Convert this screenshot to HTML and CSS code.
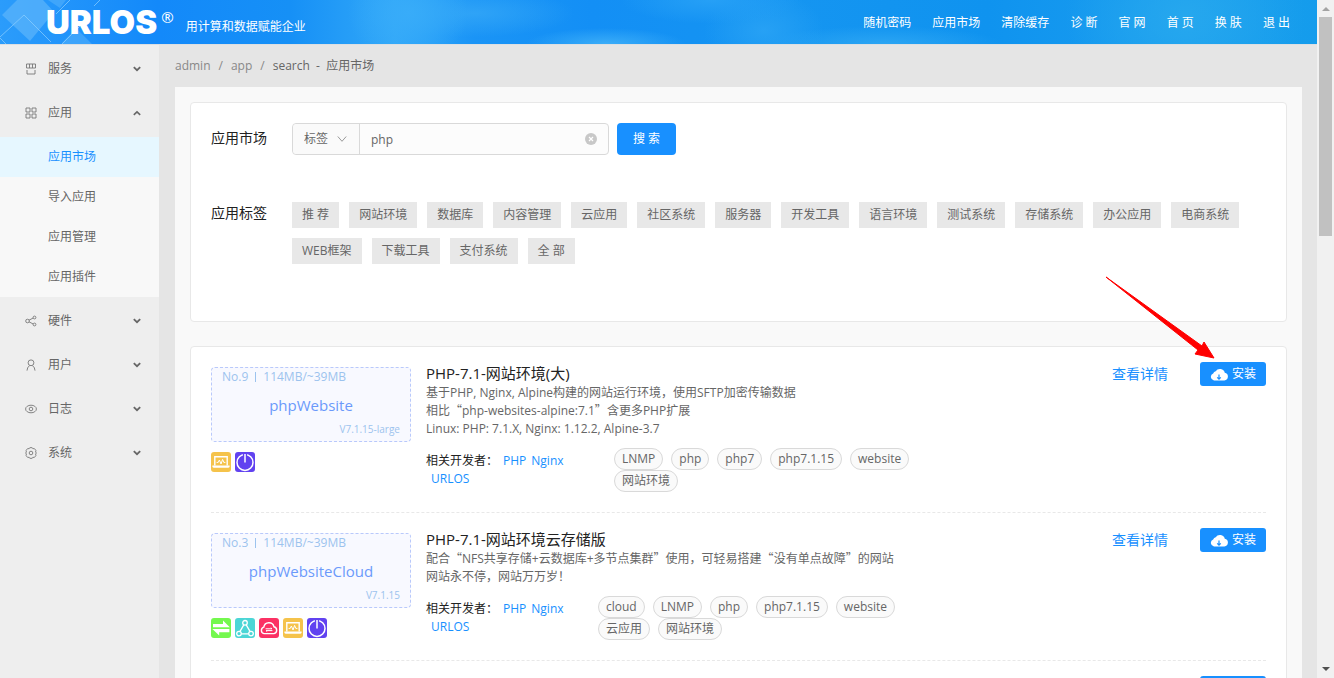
FILE: index.html
```html
<!DOCTYPE html>
<html lang="zh-CN">
<head>
    <meta charset="utf-8">
    <title>URLOS</title>
    <link rel="stylesheet" href="styles.css">
</head>
<body>
    <!-- shared icons -->
    <svg class="defs" width="0" height="0">
        <symbol id="i-down" viewBox="0 0 8 6"><path d="M0.8 1.2 L4 4.2 L7.2 1.2" fill="none" stroke="currentColor" stroke-width="1.8"/></symbol>
        <symbol id="i-up" viewBox="0 0 8 6"><path d="M0.8 4.8 L4 1.8 L7.2 4.8" fill="none" stroke="currentColor" stroke-width="1.6"/></symbol>
        <symbol id="i-cloud" viewBox="0 0 18 13">
            <path d="M4 12.5 A3.7 3.7 0 0 1 3.2 5.4 A3.4 3.4 0 0 1 5.7 3.3 A5 5 0 0 1 14.8 4.8 A3.9 3.9 0 0 1 14.4 12.5 Z" fill="#fff"/>
            <path d="M9 6.4 V11.2 M7.2 9.4 L9 11.2 L10.8 9.4" fill="none" stroke="#1890ff" stroke-width="1.2"/>
        </symbol>
        <symbol id="b-swap" viewBox="0 0 20 20">
            <rect width="20" height="20" rx="3" fill="#74f84e"/>
            <path d="M2 5.9 H12 V2.4 L18.8 9.2 H2 Z M18.4 11 H1.4 L8.2 17.6 V14.2 H18.4 Z" fill="#fff"/>
        </symbol>
        <symbol id="b-nodes" viewBox="0 0 20 20">
            <rect width="20" height="20" rx="3" fill="#4cd6d6"/>
            <g fill="none" stroke="#fff" stroke-width="1.3">
                <circle cx="10" cy="4.8" r="2.3"/><circle cx="4" cy="15.6" r="2.3"/><circle cx="16" cy="15.6" r="2.3"/>
                <path d="M8.8 6.9 L5 13.4 M11.2 6.9 L15 13.4 M6.4 15.8 H13.6"/>
            </g>
        </symbol>
        <symbol id="b-cloud" viewBox="0 0 20 20">
            <rect width="20" height="20" rx="3" fill="#fb3164"/>
            <path d="M5 15.6 A3.3 3.3 0 0 1 4.8 9.2 A5.2 5.2 0 0 1 15 8.8 A3.5 3.5 0 0 1 15 15.6 Z" fill="none" stroke="#fff" stroke-width="1.4"/>
            <path d="M6.6 10.8 H13 L11.8 9.8 M13.4 12.6 H7 L8.2 13.6" fill="none" stroke="#fff" stroke-width="1"/>
        </symbol>
        <symbol id="b-laptop" viewBox="0 0 20 20">
            <rect width="20" height="20" rx="3" fill="#f5c34b"/>
            <path d="M3.8 13.6 V4.8 H16.2 V13.6" fill="none" stroke="#fff" stroke-width="1.4"/>
            <path d="M1.4 13.6 H18.6 V14.6 Q18.4 15.8 17 15.8 H3 Q1.6 15.8 1.4 14.6 Z" fill="#fff"/>
            <path d="M5.6 10.4 H7.2 L8.4 8 L10 12 L11.6 7.4 L12.8 10.4 H14.4" fill="none" stroke="#fff" stroke-width="1"/>
        </symbol>
        <symbol id="b-power" viewBox="0 0 20 20">
            <rect width="20" height="20" rx="3" fill="#6142f0"/>
            <circle cx="10" cy="10.4" r="8" fill="none" stroke="#fff" stroke-width="1.5"/>
            <path d="M10 1 V10.4" stroke="#6142f0" stroke-width="4"/>
            <path d="M10 2 V10.4" stroke="#fff" stroke-width="1.5"/>
        </symbol>
    </svg>

    <div class="page">
        <header class="header">
            <svg class="header-pattern" viewBox="0 0 160 44" width="160" height="44">
                <path d="M2 15 L17 0 H43 L54 12 L30 41 Z" fill="#5cb5fb" opacity="0.7"/>
                <path d="M48 0 H66 L60 8 Z M62 43 L76 28 L92 44 H62 Z" fill="#5cb5fb" opacity="0.5"/>
                <path d="M0 37 L24 15 L51 42 M70 0 L56 14 M100 0 L94 6 M62 44 L80 26 M0 38 L6 44" fill="none" stroke="#8fd0ff" opacity="0.7"/>
            </svg>
            <h1 class="logo">URLOS<sup>®</sup></h1>
            <p class="slogan">用计算和数据赋能企业</p>
            <nav class="nav">
                <a href="#">随机密码</a>
                <a href="#">应用市场</a>
                <a href="#">清除缓存</a>
                <a href="#">诊 断</a>
                <a href="#">官 网</a>
                <a href="#">首 页</a>
                <a href="#">换 肤</a>
                <a href="#">退 出</a>
            </nav>
        </header>

        <div class="body">
            <aside class="sidebar">
                <ul class="menu">
                    <li><a class="menu-title" href="#">
                        <svg class="menu-icon" viewBox="0 0 12 12"><path d="M1.5 1 H10.5 V5 H1.5 Z M4.5 1 V5 M7.5 1 V5 M2 7 V11 H10 V7"/></svg>
                        服务<svg class="arrow"><use href="#i-down"/></svg></a></li>
                    <li><a class="menu-title" href="#">
                        <svg class="menu-icon" viewBox="0 0 12 12"><path d="M1 1 H5 V5 H1 Z M7 1 H11 V5 H7 Z M1 7 H5 V11 H1 Z M7 7 H11 V11 H7 Z"/></svg>
                        应用<svg class="arrow"><use href="#i-up"/></svg></a>
                        <ul class="submenu">
                            <li><a class="active" href="#">应用市场</a></li>
                            <li><a href="#">导入应用</a></li>
                            <li><a href="#">应用管理</a></li>
                            <li><a href="#">应用插件</a></li>
                        </ul>
                    </li>
                    <li><a class="menu-title" href="#">
                        <svg class="menu-icon" viewBox="0 0 12 12"><circle cx="2.5" cy="6" r="1.8"/><circle cx="9.5" cy="2.5" r="1.4"/><circle cx="9.5" cy="9.5" r="1.4"/><path d="M4 5.2 L8.2 3 M4 6.8 L8.2 9"/></svg>
                        硬件<svg class="arrow"><use href="#i-down"/></svg></a></li>
                    <li><a class="menu-title" href="#">
                        <svg class="menu-icon" viewBox="0 0 12 12"><circle cx="6" cy="3.8" r="2.9"/><path d="M2 11.6 Q2.2 7.6 4.6 6.8 M10 11.6 Q9.8 7.6 7.4 6.8"/></svg>
                        用户<svg class="arrow"><use href="#i-down"/></svg></a></li>
                    <li><a class="menu-title" href="#">
                        <svg class="menu-icon" viewBox="0 0 12 12"><ellipse cx="6" cy="6" rx="5.4" ry="3.8"/><circle cx="6" cy="6" r="1.8"/></svg>
                        日志<svg class="arrow"><use href="#i-down"/></svg></a></li>
                    <li><a class="menu-title" href="#">
                        <svg class="menu-icon" viewBox="0 0 12 12"><path d="M4.8 0.7 H7.2 L7.8 1.7 L9.4 1.6 L10.9 3.4 L10.6 5 L11.4 6 L10.6 7 L10.9 8.6 L9.4 10.4 L7.8 10.3 L7.2 11.3 H4.8 L4.2 10.3 L2.6 10.4 L1.1 8.6 L1.4 7 L0.6 6 L1.4 5 L1.1 3.4 L2.6 1.6 L4.2 1.7 Z"/><circle cx="6" cy="6" r="1.8"/></svg>
                        系统<svg class="arrow"><use href="#i-down"/></svg></a></li>
                </ul>
            </aside>

            <main class="content">
                <div class="breadcrumb"><a href="#">admin</a><i>/</i><a href="#">app</a><i>/</i><span>search &nbsp;- &nbsp;应用市场</span></div>

                <div class="panel">
                    <section class="card filter">
                        <form class="filter-row">
                            <label class="filter-label" for="keyword">应用市场</label>
                            <div class="search">
                                <div class="search-type">
                                    <select aria-label="标签"><option>标签</option></select>
                                    <svg viewBox="0 0 10 8"><path d="M0.8 1.5 L5 6.3 L9.2 1.5" fill="none" stroke="#999"/></svg>
                                </div>
                                <div class="search-text">
                                    <input id="keyword" type="text" value="php">
                                    <button class="clear" type="button"><svg viewBox="0 0 12 12"><circle cx="6" cy="6" r="6" fill="#c8c8c8"/><path d="M4 4 L8 8 M8 4 L4 8" stroke="#fff" stroke-width="1.2"/></svg></button>
                                </div>
                            </div>
                            <button class="btn btn-search" type="button">搜 索</button>
                        </form>
                        <div class="filter-row">
                            <span class="filter-label">应用标签</span>
                            <div class="labels">
                                <button>推 荐</button>
                                <button>网站环境</button>
                                <button>数据库</button>
                                <button>内容管理</button>
                                <button>云应用</button>
                                <button>社区系统</button>
                                <button>服务器</button>
                                <button>开发工具</button>
                                <button>语言环境</button>
                                <button>测试系统</button>
                                <button>存储系统</button>
                                <button>办公应用</button>
                                <button>电商系统</button>
                                <button>WEB框架</button>
                                <button>下载工具</button>
                                <button>支付系统</button>
                                <button>全 部</button>
                            </div>
                        </div>
                    </section>

                    <section class="card list">
                        <article class="app">
                            <div class="app-side">
                                <div class="thumb">
                                    <div class="thumb-top"><span>No.9</span><span>114MB/~39MB</span></div>
                                    <div class="thumb-name">phpWebsite</div>
                                    <div class="thumb-version">V7.1.15-large</div>
                                </div>
                                <div class="badges">
                                    <svg><use href="#b-laptop"/></svg>
                                    <svg><use href="#b-power"/></svg>
                                </div>
                            </div>
                            <div class="app-info">
                                <h2>PHP-7.1-网站环境(大)</h2>
                                <p>基于PHP, Nginx, Alpine构建的网站运行环境，使用SFTP加密传输数据<br>
                                相比<q>php-websites-alpine:7.1</q>含更多PHP扩展<br>
                                Linux: PHP: 7.1.X, Nginx: 1.12.2, Alpine-3.7</p>
                                <div class="meta">
                                    <div class="devs wide">相关开发者：<a href="#">PHP</a><a href="#">Nginx</a><br><a href="#">URLOS</a></div>
                                    <ul class="tags">
                                        <li>LNMP</li>
                                        <li>php</li>
                                        <li>php7</li>
                                        <li>php7.1.15</li>
                                        <li>website</li>
                                        <li>网站环境</li>
                                    </ul>
                                </div>
                            </div>
                            <div class="actions">
                                <a href="#">查看详情</a>
                                <button class="btn btn-install"><svg><use href="#i-cloud"/></svg>安装</button>
                            </div>
                        </article>

                        <article class="app">
                            <div class="app-side">
                                <div class="thumb">
                                    <div class="thumb-top"><span>No.3</span><span>114MB/~39MB</span></div>
                                    <div class="thumb-name">phpWebsiteCloud</div>
                                    <div class="thumb-version">V7.1.15</div>
                                </div>
                                <div class="badges">
                                    <svg><use href="#b-swap"/></svg>
                                    <svg><use href="#b-nodes"/></svg>
                                    <svg><use href="#b-cloud"/></svg>
                                    <svg><use href="#b-laptop"/></svg>
                                    <svg><use href="#b-power"/></svg>
                                </div>
                            </div>
                            <div class="app-info">
                                <h2>PHP-7.1-网站环境云存储版</h2>
                                <p>配合<q>NFS共享存储+云数据库+多节点集群</q>使用，可轻易搭建<q>没有单点故障</q>的网站<br>
                                网站永不停，网站万万岁！</p>
                                <div class="meta">
                                    <div class="devs">相关开发者：<a href="#">PHP</a><a href="#">Nginx</a><br><a href="#">URLOS</a></div>
                                    <ul class="tags">
                                        <li>cloud</li>
                                        <li>LNMP</li>
                                        <li>php</li>
                                        <li>php7.1.15</li>
                                        <li>website</li>
                                        <li>云应用</li>
                                        <li>网站环境</li>
                                    </ul>
                                </div>
                            </div>
                            <div class="actions">
                                <a href="#">查看详情</a>
                                <button class="btn btn-install"><svg><use href="#i-cloud"/></svg>安装</button>
                            </div>
                        </article>

                        <article class="app">
                            <div class="app-info"></div>
                            <div class="actions">
                                <button class="btn btn-install"><svg><use href="#i-cloud"/></svg></button>
                            </div>
                        </article>

                        <svg class="pointer" viewBox="0 0 112 86"><path d="M1 1 L93 74 L90 78 L109 82 L99 66 L97 70 Z" fill="#f00" stroke="#f00" stroke-width="1"/></svg>
                    </section>
                </div>
            </main>
        </div>
    </div>

    <div class="scrollbar">
        <svg viewBox="0 0 8 4"><path d="M0 4 L4 0 L8 4 Z" fill="#a3a3a3"/></svg>
        <div class="thumb-bar"></div>
        <svg viewBox="0 0 8 4"><path d="M0 0 L4 4 L8 0 Z" fill="#505050"/></svg>
    </div>
</body>
</html>
```
FILE: styles.css
```css
* {
    box-sizing: border-box;
}
body {
    margin: 0;
    display: flex;
    height: 100vh;
    overflow: hidden;
    font-family: "Open Sans", "Noto Sans CJK SC", sans-serif;
    font-size: 12px;
    line-height: 18px;
    color: #666;
    background: #e5e5e5;
}
h1, h2, p, ul {
    margin: 0;
    padding: 0;
    font-weight: normal;
}
ul {
    list-style: none;
}
a {
    color: inherit;
    text-decoration: none;
}
button, input, select {
    font: inherit;
    color: inherit;
    margin: 0;
    border: 0;
}
button {
    cursor: pointer;
    white-space: nowrap;
}
.defs {
    position: absolute;
}
.page {
    flex: 1;
    min-width: 0;
    display: flex;
    flex-direction: column;
}

/* header */
.header {
    position: relative;
    flex: none;
    height: 45px;
    display: flex;
    align-items: center;
    padding: 0 27px 0 46px;
    border-bottom: 1px solid #dcdfe2;
    color: #fff;
    background:
        radial-gradient(ellipse 60px 50px at 31% 30%, #38acf9, transparent),
        radial-gradient(ellipse 100px 24px at 36% 30%, #34a7f7cc, transparent),
        radial-gradient(ellipse 80px 16px at 46% 100%, #3badf8, transparent),
        radial-gradient(ellipse 90px 24px at 54% 0%, #26a0f6, transparent),
        radial-gradient(ellipse 60px 40px at 58% 70%, #2ba4f5cc, transparent),
        radial-gradient(ellipse 120px 18px at 67% 100%, #2ba5f3, transparent),
        radial-gradient(ellipse 120px 90px at 90% 40%, #2aabeebb, transparent),
        linear-gradient(90deg, #2b9cfb 0, #1389fa 12%, #1690f6 22%, #32a8f8 30%, #1a94f6 36%, #138ff5 45%, #1595f1 60%, #0f93ef 75%, #1b9eee 90%, #149cec 100%);
}
.header-pattern {
    position: absolute;
    left: 0;
    top: 0;
}
.logo {
    position: relative;
    display: flex;
    font-family: Inter, "Liberation Sans", sans-serif;
    font-size: 33px;
    font-weight: 900;
    line-height: 44px;
}
.logo sup {
    margin-left: 4px;
    font-family: "Open Sans", sans-serif;
    font-size: 15px;
    font-weight: normal;
    line-height: 34px;
}
.slogan {
    margin: 10px 0 0 12px;
}
.nav {
    margin-left: auto;
    padding-top: 2px;
    display: flex;
    gap: 21px;
}

/* sidebar */
.body {
    flex: 1;
    min-height: 0;
    display: flex;
}
.sidebar {
    flex: none;
    width: 159px;
    background: #eee;
}
.menu {
    padding-top: 1px;
}
.menu-title {
    display: flex;
    align-items: center;
    height: 44px;
    padding: 2px 18px 0 25px;
}
.menu-icon {
    width: 12px;
    height: 12px;
    margin-right: 11px;
    fill: none;
    stroke: #777;
    stroke-width: 0.9;
}
.arrow {
    width: 8px;
    height: 6px;
    margin-left: auto;
}
.submenu {
    margin: 3px 0 1px;
    background: #f8f8f8;
}
.submenu a {
    display: block;
    padding-left: 48px;
    line-height: 40px;
}
.submenu .active {
    color: #1890ff;
    background: #e6f7ff;
}

/* content */
.content {
    flex: 1;
    min-width: 0;
    padding: 0 15px 0 16px;
    overflow: hidden;
}
.breadcrumb {
    line-height: 42px;
    color: #888;
}
.breadcrumb i {
    margin: 0 8px;
    font-style: normal;
}
.breadcrumb span {
    color: #666;
}
.panel {
    padding: 15px;
    background: #f9f9f9;
}
.card {
    background: #fff;
    border: 1px solid #e8e8e8;
    border-radius: 4px;
}
.filter {
    padding: 20px 20px 57px;
    margin-bottom: 24px;
}
.filter-row {
    display: flex;
}
.filter-row + .filter-row {
    margin-top: 47px;
}
.filter-label {
    flex: none;
    width: 81px;
    font-size: 14px;
    line-height: 30px;
    color: #222;
}
.filter-row + .filter-row .filter-label {
    line-height: 22px;
}
.search {
    display: flex;
    width: 317px;
    height: 32px;
    margin-right: 8px;
    border: 1px solid #d9d9d9;
    border-radius: 4px;
    background: #fcfcfc;
}
.search-type {
    position: relative;
    width: 67px;
    border-right: 1px solid #d9d9d9;
    background: #fafafa;
    border-radius: 4px 0 0 4px;
}
.search-type select {
    width: 100%;
    height: 30px;
    padding: 0 11px;
    background: none;
    appearance: none;
}
.search-type svg {
    position: absolute;
    right: 12px;
    top: 11px;
    width: 10px;
    height: 8px;
    pointer-events: none;
}
.search-text {
    position: relative;
    flex: 1;
}
.search-text input {
    width: 100%;
    height: 30px;
    padding: 1px 30px 0 11px;
    background: none;
}
.clear {
    position: absolute;
    right: 11px;
    top: 9px;
    width: 12px;
    height: 12px;
    padding: 0;
    background: none;
}
.clear svg {
    display: block;
}
.btn {
    border-radius: 4px;
    color: #fff;
    background: #1890ff;
}
.btn-search {
    height: 32px;
    padding: 0 16px;
}
.labels {
    display: flex;
    flex-wrap: wrap;
    gap: 10px;
}
.labels button {
    height: 26px;
    padding: 0 10px;
    background: #e8e8e8;
}

/* app list */
.list {
    position: relative;
    padding: 0 20px;
}
.app {
    display: flex;
    padding: 15px 0 20px;
    border-bottom: 1px dashed #e8e8e8;
}
.app-side {
    flex: none;
    width: 200px;
    margin-right: 15px;
    padding-top: 5px;
}
.thumb {
    height: 75px;
    padding: 0 10px;
    border: 1px dashed #b9c9fb;
    border-radius: 4px;
    color: #9cc3ee;
    background: #f8f9ff;
}
.thumb-top {
    display: flex;
    align-items: center;
}
.thumb-top span + span {
    margin-left: 7px;
    padding-left: 7px;
    line-height: 10px;
    border-left: 1px solid #9cc3ee;
}
.thumb-name {
    font-size: 15px;
    line-height: 38px;
    text-align: center;
    color: #6b99fb;
}
.thumb-version {
    font-size: 10px;
    line-height: 10px;
    text-align: right;
}
.badges {
    display: flex;
    gap: 4px;
    margin-top: 10px;
}
.badges svg {
    width: 20px;
    height: 20px;
}
.app-info {
    flex: 1;
    min-width: 0;
}
.app-info h2 {
    font-size: 15px;
    line-height: 22px;
    color: #222;
}
.app-info q {
    quotes: "“" "”";
}
.app-info q::before, .app-info q::after {
    font-family: "Noto Sans CJK SC", sans-serif;
    line-height: 0;
}
.meta {
    display: flex;
    margin-top: 10px;
}
.devs {
    width: 172px;
    padding-top: 4px;
    color: #222;
}
.devs.wide {
    width: 188px;
}
.devs a {
    margin-left: 5px;
    color: #1890ff;
}
.tags {
    display: flex;
    flex-wrap: wrap;
    column-gap: 8px;
    width: 300px;
}
.tags li {
    height: 22px;
    padding: 0 7px;
    line-height: 20px;
    border: 1px solid #d9d9d9;
    border-radius: 11px;
    background: #fafafa;
}
.actions {
    display: flex;
    align-items: flex-start;
    gap: 32px;
    font-size: 14px;
    line-height: 24px;
    color: #1890ff;
}
.btn-install {
    display: flex;
    align-items: center;
    gap: 4px;
    width: 66px;
    height: 24px;
    padding: 0 10px;
    font-size: 12px;
    border-radius: 3px;
}
.btn-install svg {
    width: 18px;
    height: 13px;
}
.pointer {
    position: absolute;
    right: 69px;
    top: -71px;
    width: 112px;
    height: 86px;
}

/* scrollbar */
.scrollbar {
    flex: none;
    width: 17px;
    display: flex;
    flex-direction: column;
    align-items: center;
    padding: 7px 0;
    background: #f1f1f1;
}
.scrollbar svg {
    width: 8px;
    height: 4px;
}
.thumb-bar {
    width: 13px;
    height: 219px;
    margin: 6px 0 auto;
    background: #c1c1c1;
}
```
